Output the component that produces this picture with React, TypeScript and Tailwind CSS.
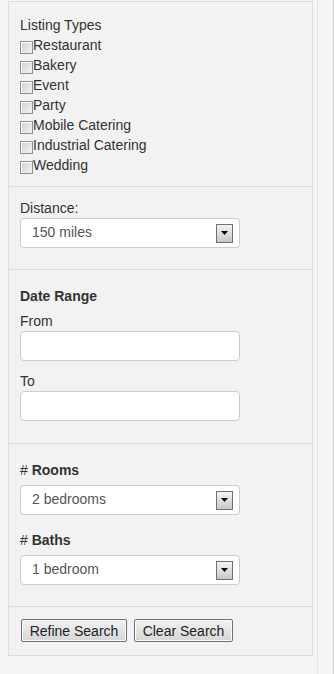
import React from "react";

function Check({ label }: { label: string }) {
  return (
    <div className="flex items-center h-[20px]">
      <span className="w-[13px] h-[13px] mt-[4px] border border-[#8f8f8f] bg-gradient-to-br from-[#d0d0d0] to-[#f4f4f4] shrink-0 shadow-[inset_1px_1px_0_#fff]" />
      <span>{label}</span>
    </div>
  );
}

function Select({ value }: { value: string }) {
  return (
    <div className="w-[220px] h-[30px] bg-white border border-[#cccccc] rounded-[4px] flex items-center pl-[11px] pr-[6px]">
      <span className="flex-1 text-[#555] -mt-[2px]">{value}</span>
      <span className="w-[17px] h-[19px] border border-[#707070] bg-gradient-to-b from-[#f4f4f4] to-[#c8c8c8] flex items-center justify-center">
        <svg width="7" height="4" viewBox="0 0 7 4">
          <path d="M0 0H7L3.5 4Z" fill="#000" />
        </svg>
      </span>
    </div>
  );
}

function Input() {
  return <div className="w-[220px] h-[30px] bg-white border border-[#cccccc] rounded-[4px]" />;
}

function Btn({ label, w }: { label: string; w: string }) {
  return (
    <button className={`${w} h-[23px] border border-[#707070] rounded-[2px] bg-gradient-to-b from-[#f2f2f2] to-[#d6d6d6] text-[#222] leading-[20px] shadow-[inset_0_0_0_1px_#fcfcfc] text-center`}>
      {label}
    </button>
  );
}

export default function App() {
  return (
    <div
      className="w-[334px] h-[674px] bg-[#f5f5f5] relative text-[14px] leading-[20px] text-[#333]"
      style={{ fontFamily: '"Liberation Sans", Arial, sans-serif' }}
    >
      <div className="absolute top-0 bottom-0 left-[317px] w-px bg-[#e6e6e6]" />
      <div className="absolute top-0 bottom-0 right-0 w-px bg-[#d2d2d2]" />
      <div className="flex pt-[1px]">
        <div className="ml-[8px] w-[305px] bg-[#f2f2f2] border border-[#dddddd]">
          <div className="px-[11px] pt-[13px] pb-[11px] border-b border-[#dddddd]">
            <div>Listing Types</div>
            {["Restaurant", "Bakery", "Event", "Party", "Mobile Catering", "Industrial Catering", "Wedding"].map((l) => (
              <Check key={l} label={l} />
            ))}
          </div>
          <div className="px-[11px] pt-[11px] pb-[21px] border-b border-[#dddddd]">
            <div>Distance:</div>
            <Select value="150 miles" />
          </div>
          <div className="px-[11px] pt-[16px] pb-[22px] border-b border-[#dddddd]">
            <div className="font-bold">Date Range</div>
            <div className="mt-[5px]">From</div>
            <Input />
            <div className="mt-[10px]">To</div>
            <Input />
          </div>
          <div className="px-[11px] pt-[16px] pb-[21px] border-b border-[#dddddd]">
            <div>
              # <span className="font-bold">Rooms</span>
            </div>
            <div className="mt-[5px]">
              <Select value="2 bedrooms" />
            </div>
            <div className="mt-[15px]">
              # <span className="font-bold">Baths</span>
            </div>
            <div className="mt-[5px]">
              <Select value="1 bedroom" />
            </div>
          </div>
          <div className="px-[12px] pt-[12px] pb-[13px] flex gap-[7px]">
            <Btn label="Refine Search" w="w-[106px]" />
            <Btn label="Clear Search" w="w-[99px]" />
          </div>
        </div>
      </div>
    </div>
  );
}
